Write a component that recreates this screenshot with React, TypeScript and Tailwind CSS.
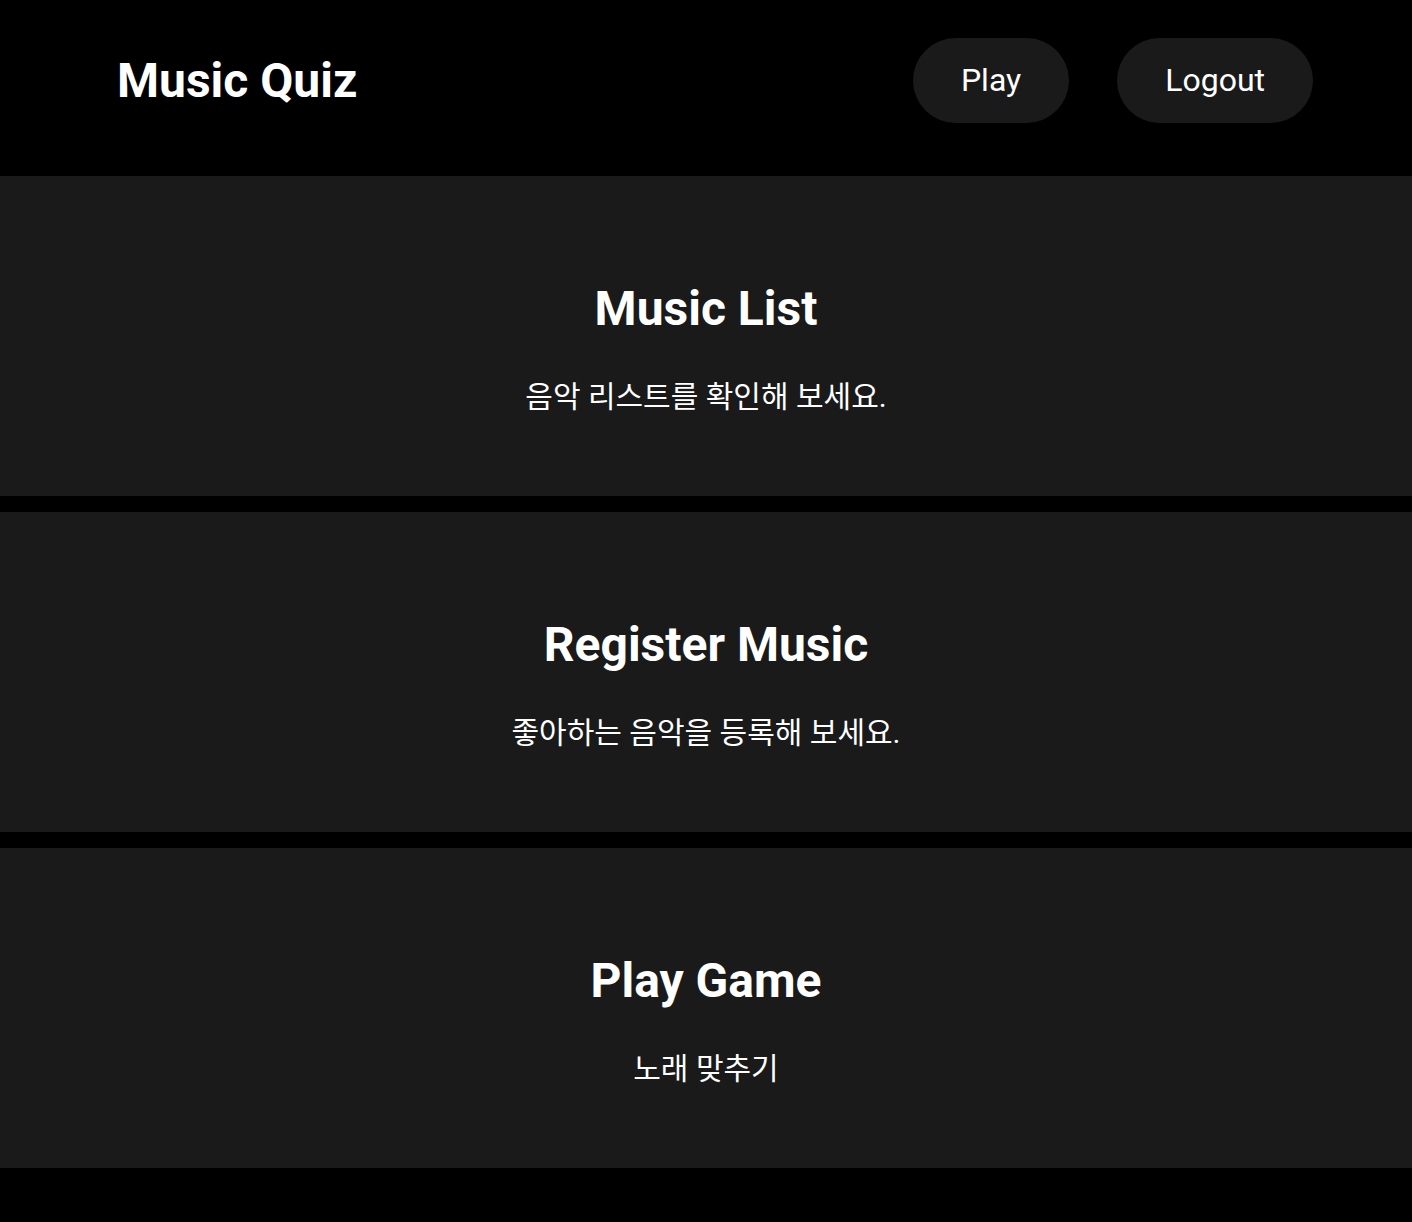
import React from "react";

const cards = [
  { title: "Music List", desc: "음악 리스트를 확인해 보세요." },
  { title: "Register Music", desc: "좋아하는 음악을 등록해 보세요." },
  { title: "Play Game", desc: "노래 맞추기" },
];

export default function App() {
  return (
    <div
      className="min-h-[1222px] bg-black text-white flex flex-col gap-4"
      style={{ fontFamily: 'Roboto, "Noto Sans CJK KR", sans-serif' }}
    >
      <header className="h-[160px] flex items-center justify-between pl-[117px] pr-[99px]">
        <h1 className="text-[48px] font-bold leading-none pt-[2px]">Music Quiz</h1>
        <nav className="flex items-center gap-12">
          <button className="h-[85px] px-12 rounded-full bg-[#1a1a1a] text-[32px] text-white">
            Play
          </button>
          <button className="h-[85px] px-12 rounded-full bg-[#1a1a1a] text-[32px] text-white">
            Logout
          </button>
        </nav>
      </header>
      {cards.map((c) => (
        <section
          key={c.title}
          className="h-[320px] bg-[#1a1a1a] flex flex-col items-center pt-[105px]"
        >
          <h2 className="text-[48px] font-bold leading-[56px]">{c.title}</h2>
          <p className="mt-[42px] text-[30px] leading-[35px]">{c.desc}</p>
        </section>
      ))}
    </div>
  );
}
